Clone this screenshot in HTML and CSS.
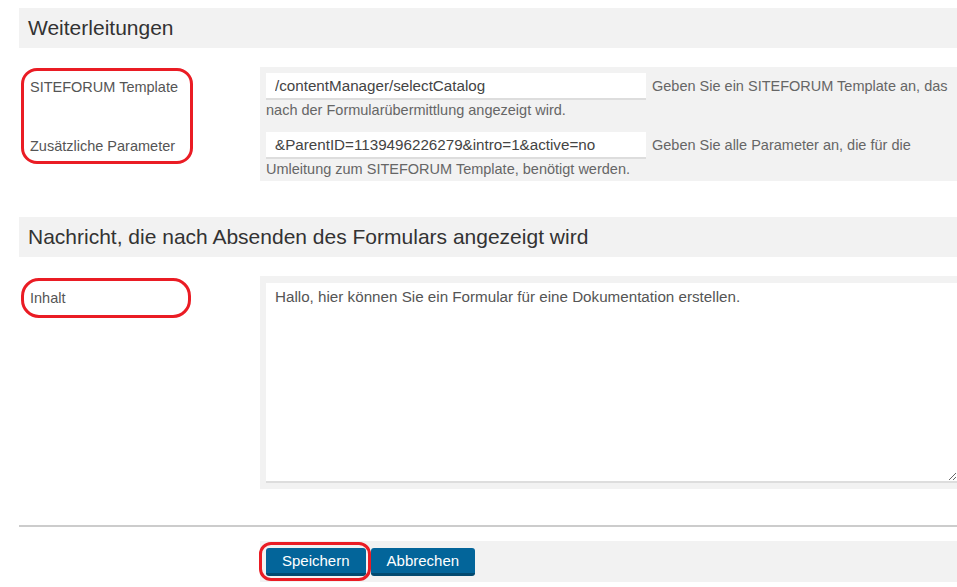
FILE: index.html
```html
<!DOCTYPE html>
<html lang="de">
<head>
  <meta charset="UTF-8">
  <title>Formular - Weiterleitungen</title>
  <link rel="stylesheet" href="styles.css">
</head>
<body>

  <div class="page">

    <div class="section">
      <h2 class="section-title">Weiterleitungen</h2>

      <div class="form-rows">
        <div class="row first">
          <label class="row-label">SITEFORUM Template</label>
          <div class="row-control">
            <input class="text-input" type="text" value="/contentManager/selectCatalog">
            <span class="help">Geben Sie ein SITEFORUM Template an, das nach der Formularübermittlung angezeigt wird.</span>
          </div>
        </div>
        <div class="row last">
          <label class="row-label">Zusätzliche Parameter</label>
          <div class="row-control">
            <input class="text-input" type="text" value="&amp;ParentID=1139496226279&amp;intro=1&amp;active=no">
            <span class="help">Geben Sie alle Parameter an, die für die Umleitung zum SITEFORUM Template, benötigt werden.</span>
          </div>
        </div>
        <div class="mark mark-redirect"></div>
      </div>
    </div>

    <div class="section">
      <h2 class="section-title">Nachricht, die nach Absenden des Formulars angezeigt wird</h2>

      <div class="form-rows">
        <div class="row single">
          <label class="row-label">Inhalt</label>
          <div class="row-control">
            <textarea class="text-area">Hallo, hier können Sie ein Formular für eine Dokumentation erstellen.</textarea>
          </div>
        </div>
        <div class="mark mark-content"></div>
      </div>
    </div>

    <hr class="divider">

    <div class="actions">
      <div class="actions-spacer"></div>
      <div class="actions-bar">
        <button class="btn" type="button">Speichern</button>
        <button class="btn" type="button">Abbrechen</button>
        <div class="mark mark-save"></div>
      </div>
    </div>

  </div>

</body>
</html>
```

FILE: styles.css
```css
body {
  margin: 0;
  background-color: #ffffff;
  color: #555555;
  font-family: 'Liberation Sans', Arial, sans-serif;
  font-size: 14.5px;
}

.page {
  padding: 8px 0 0 19px;
}

.section {
  margin-bottom: 36px;
}

.section-title {
  margin: 0;
  background-color: #f2f2f2;
  color: #333333;
  font-size: 21px;
  font-weight: normal;
  line-height: 40px;
  padding-left: 9px;
}

.form-rows {
  position: relative;
  margin-top: 19px;
}

.row {
  display: grid;
  grid-template-columns: 241px 1fr;
}

.row-label {
  padding: 12px 0 0 11px;
  line-height: 16px;
}

.row + .row .row-label {
  padding-top: 18px;
}

.row-control {
  background-color: #f2f2f2;
  padding: 12px 0 0 6px;
  line-height: 20px;
}

.row.first .row-control {
  padding-top: 6px;
}

.row.last .row-control {
  padding-bottom: 2px;
}

.text-input {
  width: 380px;
  height: 27px;
  box-sizing: border-box;
  border: none;
  border-bottom: 2px solid #dddddd;
  background-color: #ffffff;
  padding: 0 9px;
  margin-right: 2px;
  color: #444444;
  font-family: inherit;
  font-size: 15.2px;
  vertical-align: baseline;
}

.help {
  color: #666666;
}

.row.single .row-label {
  padding-top: 14px;
}

.row.single .row-control {
  padding: 7px 0 6px 6px;
}

.text-area {
  display: block;
  width: 100%;
  height: 200px;
  box-sizing: border-box;
  border: none;
  border-bottom: 2px solid #dddddd;
  background-color: #ffffff;
  padding: 5px 9px;
  color: #555555;
  font-family: inherit;
  font-size: 15.2px;
  resize: vertical;
}

.divider {
  border: none;
  border-top: 2px solid #cccccc;
  margin: 0;
}

.actions {
  display: grid;
  grid-template-columns: 241px 1fr;
  margin-top: 14px;
}

.actions-bar {
  position: relative;
  background-color: #f2f2f2;
  padding: 7px 6px 6px;
  display: flex;
  gap: 5px;
}

.btn {
  background-color: #03659a;
  color: #ffffff;
  border: none;
  border-bottom: 3px solid #034a70;
  border-radius: 3px;
  font-family: inherit;
  font-size: 15px;
  height: 28px;
  padding: 0 16px;
}

/* red annotation marks */
.mark {
  position: absolute;
  border: 3px solid #ea1c24;
  box-sizing: border-box;
}

.mark-redirect {
  left: 2px;
  top: 1px;
  width: 172px;
  height: 96px;
  border-radius: 16px;
}

.mark-content {
  left: 2px;
  top: 2px;
  width: 170px;
  height: 40px;
  border-radius: 18px;
}

.mark-save {
  left: -1px;
  top: 1px;
  width: 112px;
  height: 39px;
  border-radius: 12px;
}
```
